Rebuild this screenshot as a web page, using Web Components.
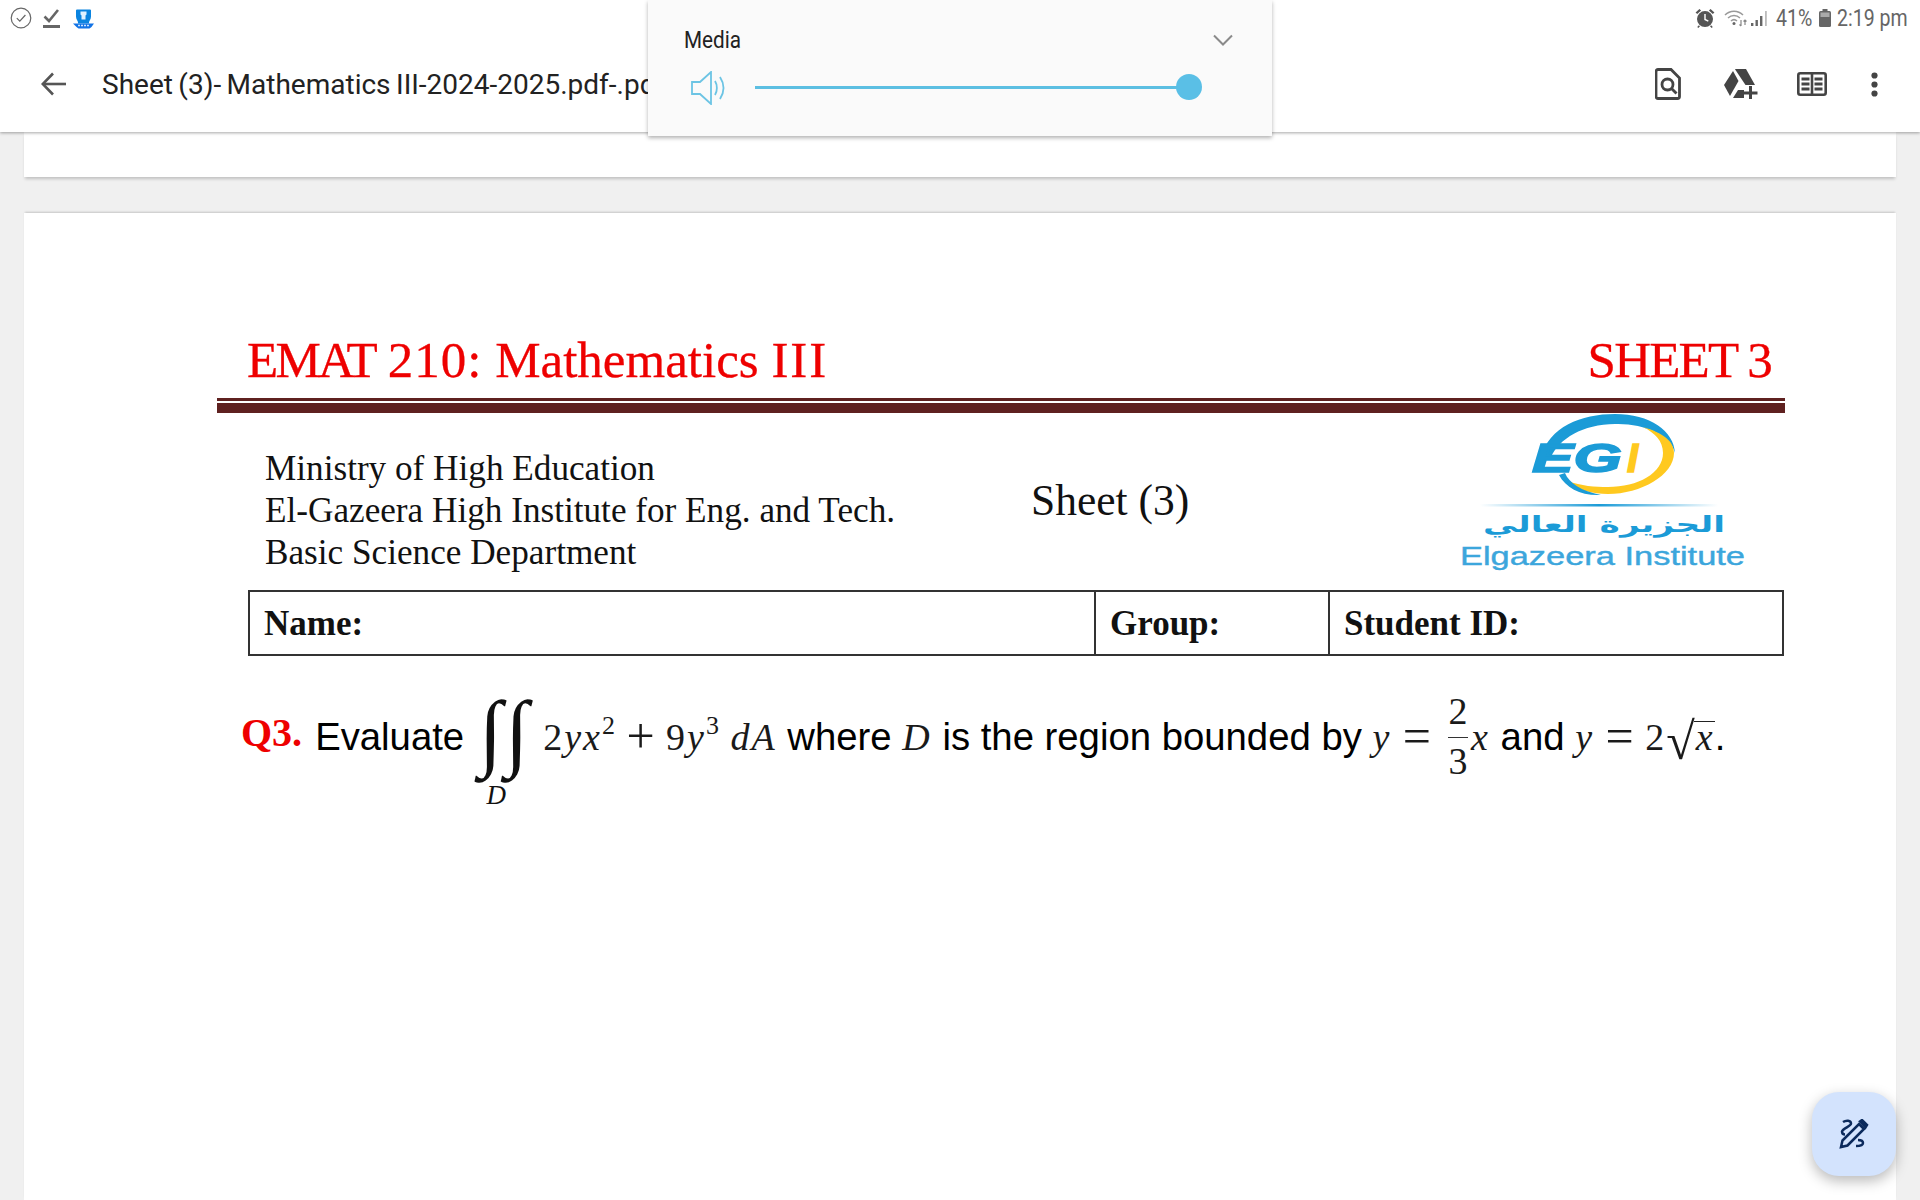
<!DOCTYPE html>
<html lang="en">
<head>
<meta charset="utf-8">
<title>Sheet 3</title>
<style>
html,body{margin:0;padding:0;width:1920px;height:1200px;overflow:hidden;background:#f0f0f0;}
body{display:flex;flex-direction:column;font-family:"Roboto",sans-serif;position:relative;}
.emat{letter-spacing:-2.700px;}
.code{letter-spacing:1px;}
.three{letter-spacing:2px;}
</style>
</head>
<body>
<top-bar title-text="Sheet (3)- Mathematics III-2024-2025.pdf-.pdf"></top-bar>
<volume-panel label="Media"></volume-panel>
<pdf-viewer>
	<sheet-tail></sheet-tail>
	<pdf-page>
		<sheet-head>
			<span slot="left"><span class="emat">EMAT</span> <span class="code">210:</span> Mathematics <span class="three">III</span></span>
			<span slot="right">SHEET 3</span>
		</sheet-head>
		<sheet-info>
			<div>Ministry of High Education</div>
			<div>El-Gazeera High Institute for Eng. and Tech.</div>
			<div>Basic Science Department</div>
			<span slot="center">Sheet (3)</span>
			<egi-logo slot="logo"></egi-logo>
		</sheet-info>
		<name-table>
			<span slot="name">Name:</span>
			<span slot="group">Group:</span>
			<span slot="id">Student ID:</span>
		</name-table>
		<math-question></math-question>
	</pdf-page>
</pdf-viewer>
<fab-button></fab-button>

<script>
'use strict';

// small helper so every element below reads the same way
function shadow(el,html){
	let root = el.attachShadow({mode:'open'});
	root.innerHTML = html;
	return root;
}

class TopBar extends HTMLElement{
	constructor(){
		super();
		let title = this.getAttribute('title-text')||'';
		shadow(this,`
<style>
:host{display:block;height:132px;background:#fff;box-shadow:0 1px 3px rgba(0,0,0,.35);position:relative;z-index:2;flex:none;}
.status{height:36px;display:flex;align-items:center;padding:0 12px 0 10px;color:#666;font-size:23px;}
.status svg{display:block;flex:none;}
.left{display:flex;align-items:center;gap:11px;}
.right{margin-left:auto;display:flex;align-items:center;}
.num{display:inline-block;white-space:nowrap;transform:scaleX(.85);transform-origin:left center;}
.tools{height:96px;display:flex;align-items:center;box-sizing:border-box;}
.back{margin-left:41px;flex:none;}
.title{margin-left:35px;font-size:28px;word-spacing:-1.500px;color:#222;white-space:nowrap;width:546px;overflow:hidden;}
.acts{margin-left:auto;display:flex;align-items:center;padding-right:42px;}
.acts svg{display:block;flex:none;}
</style>
<div class="status">
	<div class="left">
		<svg width="22" height="22" viewBox="0 0 22 22" fill="none" stroke="#666" stroke-width="1.2"><circle cx="11" cy="11" r="9.8"/><path d="M6.8 11.2l3 3 5.6-6.2"/></svg>
		<svg width="17" height="20" viewBox="0 0 17 20" fill="none" stroke="#666"><path d="M1.5 8.5l4.5 4.5 9-11" stroke-width="2.6"/><path d="M0 18.500h17" stroke-width="3"/></svg>
		<svg width="21" height="21" viewBox="0 0 21 21" style="margin-left:2px"><path d="M4 1.500h13a1 1 0 0 1 1 1v6c0 3-2 4-2 6v1H5v-1c0-2-2-3-2-6v-6a1 1 0 0 1 1-1z" fill="#0a84e0"/><path d="M7.500 3.500h6v3l-1 1v4h-4v-4l-1-1z" fill="#dff1ff"/><path d="M0 15.500h21l-2.500 3.500-2 1.500h-11l-2-1.500z" fill="#1273e6"/><path d="M5 17.500h11" stroke="#cfe6ff" stroke-width="1.400" stroke-dasharray="2 1"/></svg>
	</div>
	<div class="right">
		<svg width="20" height="20" viewBox="0 0 18 18" style="margin-right:9px"><circle cx="9" cy="10" r="7.200" fill="#555"/><path d="M9 5.500v4.800l3 1.500" stroke="#fff" stroke-width="1.300" fill="none"/><path d="M.5 4L4 .8l1.500 1.400L2 5.400zM17.500 4L14 .8l-1.500 1.400L16 5.400z" fill="#555"/><path d="M4 16l-1.500 1.500M14 16l1.500 1.500" stroke="#555" stroke-width="1.400"/></svg>
		<svg width="24" height="18" viewBox="0 0 24 18" fill="none" stroke="#999" stroke-width="1.500" style="margin-right:3px"><path d="M1 6c5-5 13-5 18 0"/><path d="M4 9c3.500-3.300 8.500-3.300 12 0"/><path d="M7 12c2-1.800 4-1.800 6 0"/><circle cx="10" cy="14.500" r="1.500" fill="#666" stroke="none"/><path d="M17 11v6M15.500 15.500l1.500 1.500" stroke="#888" stroke-width="1.200"/><path d="M21 16v-5M19.500 12.500l1.500-1.500 1.500 1.500" stroke="#888" stroke-width="1.200"/></svg>
		<svg width="17" height="17" viewBox="0 0 17 17" style="margin-right:8px"><rect x="0" y="13" width="2.400" height="3" fill="#666"/><rect x="4.500" y="10" width="2.400" height="6" fill="#666"/><rect x="9" y="6" width="2.400" height="10" fill="#666"/><rect x="14" y="1" width="1.800" height="15" fill="#bbb"/></svg>
		<span class="num" style="width:36px">41%</span>
		<svg width="12" height="18" viewBox="0 0 12 18" style="margin:0 6px 0 7px"><rect x="3.500" y="0" width="5" height="2" fill="#666"/><rect x="0" y="2" width="12" height="16" rx="1.500" fill="#666"/><rect x="1.500" y="3.500" width="9" height="4.500" fill="#aaa"/></svg>
		<span class="num" style="width:71px">2:19 pm</span>
	</div>
</div>
<div class="tools">
	<svg class="back" width="26" height="24" viewBox="0 0 26 24" fill="none" stroke="#555" stroke-width="2.600"><path d="M25 12H2"/><path d="M12 1.500L1.800 12 12 22.500"/></svg>
	<div class="title">${title}</div>
	<div class="acts">
		<svg width="26" height="32" viewBox="0 0 26 32" fill="none" stroke="#444" stroke-width="2.800" style="margin-right:43px"><path d="M3 1.500h13l8.500 8.500v18.500a2 2 0 0 1-2 2H3a2 2 0 0 1-2-2v-25a2 2 0 0 1 2-2z"/><circle cx="12.500" cy="16.500" r="5.500"/><path d="M16.500 20.500l5 5"/></svg>
		<svg width="34" height="30" viewBox="0 0 34 30" fill="#444" style="margin-right:39px"><path d="M11 0h11l9 16h-9.500L11.500 1z"/><path d="M9 2l5.500 10L6 27 0 16z"/><path d="M9 29l5-8h6v8z"/><path d="M25 17h3v5.500h5.500v3H28V30h-3v-4.500h-6v-3h6z"/></svg>
		<svg width="30" height="24" viewBox="0 0 30 24" fill="none" stroke="#444" stroke-width="2.600" style="margin-right:44px"><rect x="1.300" y="1.300" width="27.400" height="21.400" rx="2"/><path d="M15 1v22"/><path d="M4.500 7h8M4.500 12h8M4.500 17h8M17.500 7h8M17.500 12h8M17.500 17h8" stroke-width="3"/></svg>
		<svg width="7" height="25" viewBox="0 0 7 25" fill="#444"><circle cx="3.500" cy="3.500" r="3.100"/><circle cx="3.500" cy="12.500" r="3.100"/><circle cx="3.500" cy="21.500" r="3.100"/></svg>
	</div>
</div>`);
	}
}

class VolumePanel extends HTMLElement{
	constructor(){
		super();
		shadow(this,`
<style>
:host{display:block;position:absolute;left:648px;top:0;width:624px;height:136px;background:#fafafa;box-shadow:0 2px 4px rgba(0,0,0,.3);z-index:5;}
.head{display:flex;align-items:center;height:40px;padding:20px 39px 0 36px;font-size:23px;color:#222;}
.head span{display:inline-block;transform:scaleX(.9);transform-origin:left center;}
.head svg{margin-left:auto;}
.row{display:flex;align-items:center;height:56px;padding-left:43px;}
.track{margin-left:28px;width:434px;height:3px;background:#5cbfe2;position:relative;margin-top:-2px;}
.thumb{position:absolute;right:-13px;top:-11.500px;width:26px;height:26px;border-radius:50%;background:#5abfe6;}
</style>
<div class="head"><span>${this.getAttribute('label')}</span>
	<svg width="20" height="12" viewBox="0 0 20 12" fill="none" stroke="#8a8a8a" stroke-width="2"><path d="M1 1.500l9 9 9-9"/></svg></div>
<div class="row">
	<svg width="36" height="34" viewBox="0 0 36 34" fill="none" stroke="#6cc4e4" stroke-width="1.800"><path d="M1 11h8L20 1v32L9 23H1z"/><path d="M24 10c2.500 4 2.500 10 0 14"/><path d="M29 6c4.500 7 4.500 15 0 22"/></svg>
	<div class="track"><div class="thumb"></div></div>
</div>`);
	}
}

class PdfViewer extends HTMLElement{
	constructor(){
		super();
		shadow(this,`
<style>
:host{display:flex;flex-direction:column;gap:36px;flex:1;padding:0 24px;overflow:hidden;min-height:0;}
</style>
<slot></slot>`);
	}
}

class SheetTail extends HTMLElement{
	constructor(){
		super();
		shadow(this,`
<style>
:host{display:block;height:45px;background:#fff;box-shadow:0 3px 3px -1px rgba(0,0,0,.2);flex:none;}
</style>`);
	}
}

class PdfPage extends HTMLElement{
	constructor(){
		super();
		shadow(this,`
<style>
:host{display:block;flex:1;background:#fff;box-shadow:0 -2px 2px -1px rgba(0,0,0,.18);box-sizing:border-box;padding:117px 111px 0 193px;}
</style>
<slot></slot>`);
	}
}

class SheetHead extends HTMLElement{
	constructor(){
		super();
		shadow(this,`
<style>
:host{display:block;}
.line{display:flex;justify-content:space-between;padding:0 14px 0 30px;font:51px/60px "Liberation Serif",serif;color:#ee0000;-webkit-text-stroke:.3px #ee0000;}
.r{letter-spacing:-1.800px;}
.thin{height:3px;background:#5f2120;margin-top:8px;}
.thick{height:10px;background:#5f2120;margin-top:2px;}
</style>
<div class="line"><span><slot name="left"></slot></span><span class="r"><slot name="right"></slot></span></div>
<div class="thin"></div><div class="thick"></div>`);
	}
}

class SheetInfo extends HTMLElement{
	constructor(){
		super();
		shadow(this,`
<style>
:host{display:grid;grid-template-columns:814px 410px 344px;height:177px;font-family:"Liberation Serif",serif;color:#111;}
.lines{padding:35px 0 0 48px;font-size:35.200px;line-height:42px;white-space:nowrap;}
.center{padding-top:62px;font-size:43.500px;line-height:50px;}
.logo{display:block;}
</style>
<div class="lines"><slot></slot></div>
<div class="center"><slot name="center"></slot></div>
<div class="logo"><slot name="logo"></slot></div>`);
	}
}

class EgiLogo extends HTMLElement{
	constructor(){
		super();
		// drawn on a box that starts at x=1441 y=413 of the page
		shadow(this,`
<style>
:host{display:block;width:344px;height:177px;}
svg{display:block;}
</style>
<svg width="344" height="177" viewBox="0 0 344 177">
	<defs><linearGradient id="ln" x1="0" x2="1"><stop offset="0" stop-color="#1b9bd7" stop-opacity="0"/><stop offset=".5" stop-color="#1b9bd7"/><stop offset="1" stop-color="#1b9bd7" stop-opacity="0"/></linearGradient></defs>
	<path d="M100 44C108 14 140 1 174 1c35 0 59 17 60 39-4-18-32-30-60-29-32 0-56 15-64 33z" fill="#1b9bd7"/>
	<path d="M202 14c20 6 31 14 31 26 0 22-33 41-66 41-15 0-32-4-40-13 13 5 27 6 40 6 30 0 55-14 55-34 0-12-8-20-20-26z" fill="#ffc91f"/>
	<path d="M118 62c7 13 22 21 42 20-20-4-32-12-36-22z" fill="#1b9bd7"/>
	<text x="91" y="59" font-family="Liberation Sans" font-weight="700" font-style="italic" font-size="40" textLength="90" lengthAdjust="spacingAndGlyphs" fill="#1b9bd7" stroke="#1b9bd7" stroke-width="1.500">EG</text>
	<text x="186" y="59" font-family="Liberation Sans" font-weight="700" font-style="italic" font-size="40" fill="#ffc91f" stroke="#ffc91f" stroke-width="1.500">I</text>
	<rect x="39" y="91" width="238" height="2.500" fill="url(#ln)"/>
	<text x="42" y="119" font-family="DejaVu Sans" font-weight="700" font-size="22" textLength="242" lengthAdjust="spacingAndGlyphs" fill="#1b9bd7" direction="rtl" text-anchor="end">الجزيرة العالي</text>
	<text x="19" y="152" font-family="Liberation Sans" font-size="26" textLength="285" lengthAdjust="spacingAndGlyphs" fill="#3ca6dc" stroke="#3ca6dc" stroke-width=".4">Elgazeera Institute</text>
</svg>`);
	}
}

class NameTable extends HTMLElement{
	constructor(){
		super();
		shadow(this,`
<style>
:host{display:grid;grid-template-columns:844px 234px 1fr;width:1536px;height:66px;margin-left:31px;box-sizing:border-box;border:2px solid #333;font:700 35px/64px "Liberation Serif",serif;color:#111;}
div{padding-left:14px;white-space:nowrap;}
div+div{border-left:2px solid #333;}
</style>
<div><slot name="name"></slot></div>
<div><slot name="group"></slot></div>
<div><slot name="id"></slot></div>`);
	}
}

class MathQuestion extends HTMLElement{
	constructor(){
		super();
		shadow(this,`
<style>
:host{display:block;height:200px;margin-left:24px;padding-top:37px;white-space:nowrap;font:38.300px/70px "Liberation Sans",sans-serif;color:#000;}
.q{font:700 40px "Liberation Serif",serif;color:#ee0000;vertical-align:4px;margin-right:13px;}
.m{font-family:"Liberation Serif",serif;font-size:38px;letter-spacing:2px;color:#1a1a1a;}
.i{font-style:italic;}
.op{font-size:50px;line-height:0;letter-spacing:0;vertical-align:-3px;}
sup{font-size:26px;line-height:0;vertical-align:16px;letter-spacing:0;}
.int{display:inline-flex;flex-direction:column;align-items:center;width:62px;margin:0 7px 0 10px;vertical-align:-10px;}
.int b{font:400 85px/80px "Liberation Serif",serif;letter-spacing:3px;color:#111;margin-top:-56px;white-space:nowrap;}
.int i{font:italic 27px/26px "Liberation Serif",serif;color:#111;margin-top:11px;margin-left:-18px;}
.frac{display:inline-flex;flex-direction:column;align-items:stretch;text-align:center;width:20px;vertical-align:26px;margin:0 3px 0 17px;font:38px/36px "Liberation Serif",serif;color:#1a1a1a;}
.frac hr{margin:8px 0 5px;border:0;border-top:1.500px solid #333;}
.rad{font-size:52px;line-height:0;letter-spacing:-1px;font-style:normal;vertical-align:-8.500px;}
.root{border-top:1.500px solid #222;display:inline-block;line-height:30px;padding:0 2px;letter-spacing:0;}
</style>
<span class="q">Q3.</span>Evaluate<span class="int"><b>∫∫</b><i>D</i></span><span class="m">2<span class="i">yx</span><sup>2</sup> <span class="op">+</span> 9<span class="i">y</span><sup>3</sup> <span class="i">dA</span></span> where <span class="m i">D</span> is the region bounded by <span class="m"><span class="i">y</span> <span class="op">=</span></span><span class="frac"><span>2</span><hr><span>3</span></span><span class="m i">x</span> and <span class="m"><span class="i">y</span> <span class="op">=</span> 2<span class="rad">√</span><span class="i root">x</span></span>.`);
	}
}

class FabButton extends HTMLElement{
	constructor(){
		super();
		shadow(this,`
<style>
:host{display:flex;align-items:center;justify-content:center;position:absolute;left:1812px;top:1092px;width:84px;height:84px;border-radius:27px;background:#d3e3fd;box-shadow:0 5px 14px rgba(0,0,0,.28);z-index:4;}
</style>
<svg width="30" height="30" viewBox="0 0 30 30" fill="none" stroke="#0b2a5c" stroke-width="2.500">
	<path d="M2 28l1.500-6.500L20 5l5 5L8.500 26.500z"/>
	<path d="M21 2.500l2-1.500 5 5-1.500 2.500z" fill="#0b2a5c"/>
	<path d="M4 3c3-2 8-2 8 1.500 0 3-8 4.500-9 8 0 1.500 1 3 3 3"/>
	<path d="M19 21c3 0 5 .5 5 3s-3 3-7 3"/>
</svg>`);
	}
}

customElements.define('top-bar',TopBar);
customElements.define('volume-panel',VolumePanel);
customElements.define('pdf-viewer',PdfViewer);
customElements.define('sheet-tail',SheetTail);
customElements.define('pdf-page',PdfPage);
customElements.define('sheet-head',SheetHead);
customElements.define('sheet-info',SheetInfo);
customElements.define('egi-logo',EgiLogo);
customElements.define('name-table',NameTable);
customElements.define('math-question',MathQuestion);
customElements.define('fab-button',FabButton);
</script>
</body>
</html>
